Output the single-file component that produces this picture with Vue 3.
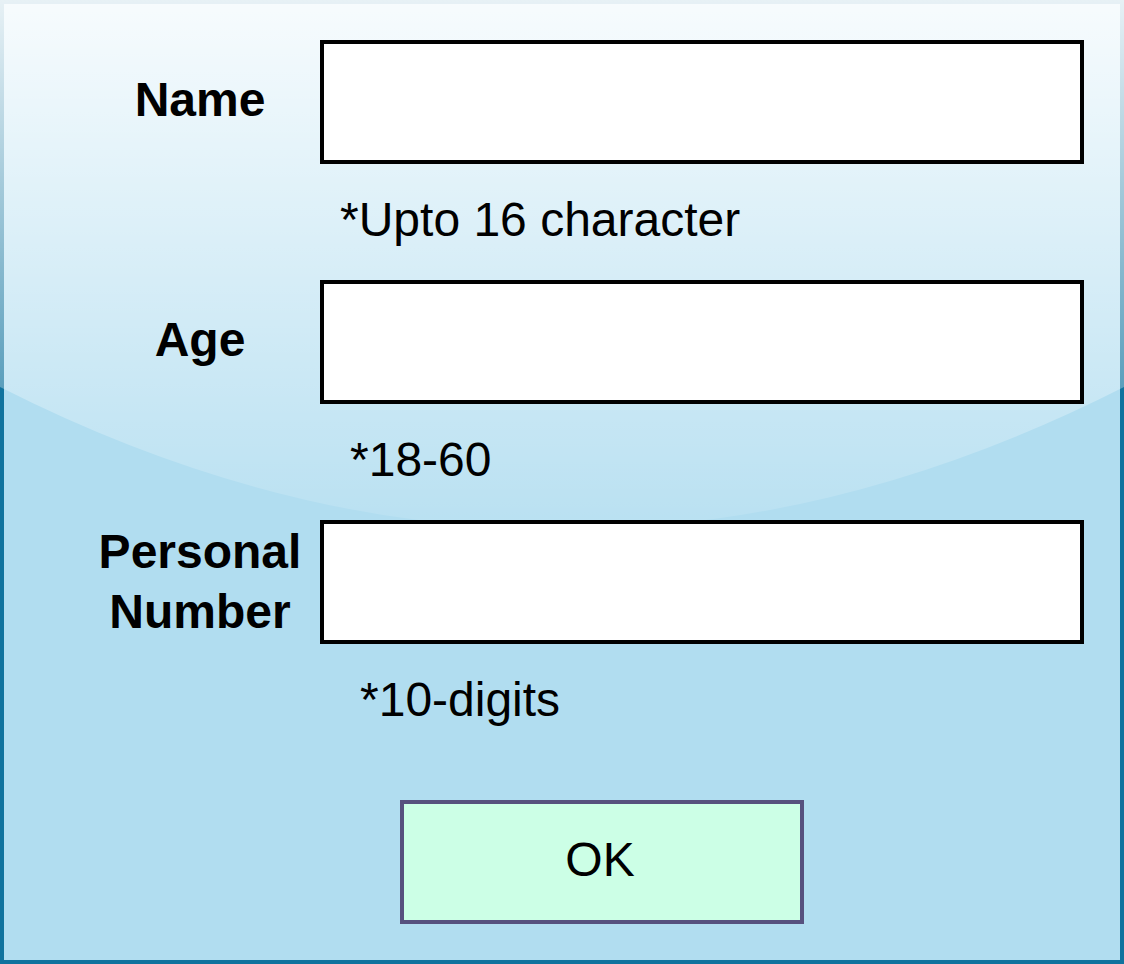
<script setup>
import { reactive } from 'vue'

const fields = [
  { id: 'name', label: 'Name', hint: '*Upto 16 character' },
  { id: 'age', label: 'Age', hint: '*18-60' },
  { id: 'number', label: 'Personal Number', hint: '*10-digits' },
]
const values = reactive({ name: '', age: '', number: '' })
</script>

<template>
  <form class="panel" @submit.prevent>
    <svg class="gloss" viewBox="0 0 1124 964" preserveAspectRatio="none" aria-hidden="true">
      <defs>
        <linearGradient id="shine" x1="0" y1="0" x2="0" y2="1">
          <stop offset="0" stop-color="#fff" stop-opacity="0.9" />
          <stop offset="1" stop-color="#fff" stop-opacity="0.1" />
        </linearGradient>
      </defs>
      <path d="M0 0H1124V387Q562 672 0 387Z" fill="url(#shine)" />
    </svg>
    <div v-for="f in fields" :key="f.id" class="row">
      <label :for="f.id" class="label" :class="f.id">{{ f.label }}</label>
      <input :id="f.id" v-model="values[f.id]" class="box" type="text" :aria-describedby="f.id + '-hint'" />
      <p :id="f.id + '-hint'" class="hint" :class="f.id">{{ f.hint }}</p>
    </div>
    <button class="ok" type="submit">OK</button>
  </form>
</template>

<style>
body {
  margin: 0;
}
</style>

<style scoped>
.panel {
  position: relative;
  box-sizing: border-box;
  min-height: 100vh;
  padding: 36px 36px 36px 76px;
  border: 4px solid #10739e;
  background: #b1ddf0;
  color: #000;
  font-family: "Liberation Sans", Arial, sans-serif;
  font-size: 48px;
  line-height: 60px;
  display: flex;
  flex-direction: column;
}
.gloss {
  position: absolute;
  top: -4px;
  left: -4px;
  width: calc(100% + 8px);
  height: calc(100% + 8px);
  pointer-events: none;
}
.row {
  position: relative;
  display: grid;
  grid-template-columns: 240px 1fr;
  grid-template-rows: 124px 116px;
}
.label {
  align-self: center;
  padding: 0 16px 4px;
  text-align: center;
  font-weight: bold;
}
.label.number {
  padding-bottom: 0;
}
.box {
  box-sizing: border-box;
  width: 100%;
  min-width: 0;
  height: 124px;
  padding: 0 20px;
  border: 4px solid #000;
  border-radius: 0;
  background: #fff;
  font: inherit;
}
.hint {
  grid-column: 2;
  align-self: center;
  margin: 0;
  padding: 0 0 4px 20px;
}
.hint.age {
  padding-left: 30px;
}
.hint.number {
  padding-left: 40px;
}
.ok {
  position: relative;
  box-sizing: border-box;
  width: 404px;
  height: 124px;
  margin: 40px 0 0 320px;
  padding: 0 4px 4px 0;
  border: 4px solid #56517e;
  border-radius: 0;
  background: #ccffe6;
  color: #000;
  font: inherit;
}
</style>
